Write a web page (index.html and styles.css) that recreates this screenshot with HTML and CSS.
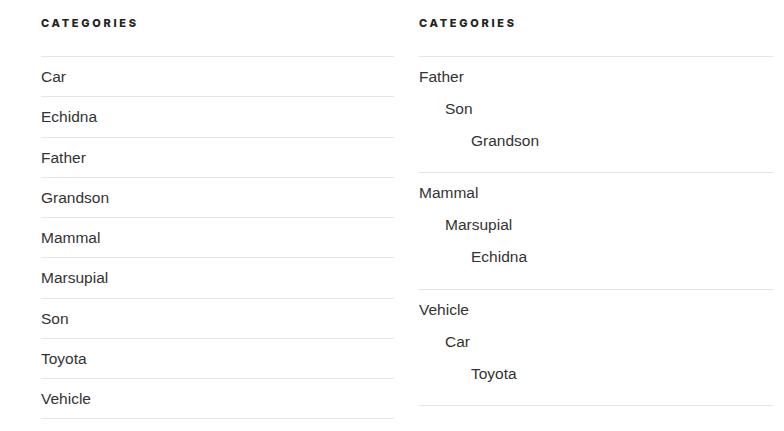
FILE: index.html
```html
<!DOCTYPE html>
<html>
<head>
<meta charset="utf-8">
<link rel="stylesheet" href="styles.css">
</head>
<body>
<div class="widgets">
  <section class="widget">
    <h2 class="widget-title">Categories</h2>
    <ul class="cats">
      <li><a href="#">Car</a></li>
      <li><a href="#">Echidna</a></li>
      <li><a href="#">Father</a></li>
      <li><a href="#">Grandson</a></li>
      <li><a href="#">Mammal</a></li>
      <li><a href="#">Marsupial</a></li>
      <li><a href="#">Son</a></li>
      <li><a href="#">Toyota</a></li>
      <li><a href="#">Vehicle</a></li>
    </ul>
  </section>
  <section class="widget">
    <h2 class="widget-title">Categories</h2>
    <ul class="cats tree">
      <li><a href="#">Father</a>
        <ul class="children">
          <li><a href="#">Son</a>
            <ul class="children">
              <li><a href="#">Grandson</a></li>
            </ul>
          </li>
        </ul>
      </li>
      <li><a href="#">Mammal</a>
        <ul class="children">
          <li><a href="#">Marsupial</a>
            <ul class="children">
              <li><a href="#">Echidna</a></li>
            </ul>
          </li>
        </ul>
      </li>
      <li><a href="#">Vehicle</a>
        <ul class="children">
          <li><a href="#">Car</a>
            <ul class="children">
              <li><a href="#">Toyota</a></li>
            </ul>
          </li>
        </ul>
      </li>
    </ul>
  </section>
</div>
</body>
</html>
```
FILE: styles.css
```css
html, body {
  margin: 0;
  padding: 0;
  background: #fff;
}
body {
  font-family: "Liberation Sans", Arial, sans-serif;
  color: #333;
}
.widgets {
  display: grid;
  grid-template-columns: 353px 354px;
  column-gap: 25px;
  padding: 0 0 0 41px;
}
.widget-title {
  margin: 0;
  padding: 17px 0 0;
  height: 56px;
  box-sizing: border-box;
  font-family: Inter, "Liberation Sans", sans-serif;
  font-size: 11px;
  font-weight: 800;
  letter-spacing: 2.7px;
  text-transform: uppercase;
  color: #222;
  line-height: 12px;
}
.cats {
  list-style: none;
  margin: 0;
  padding: 0;
  border-bottom: 1px solid #e6e6e6;
}
.cats > li {
  border-top: 1px solid #e6e6e6;
  padding: 8px 0;
  font-size: 15.5px;
  line-height: 23.25px;
}
.cats a {
  color: #333;
  text-decoration: none;
}
.tree > li {
  padding: 8px 0 20px;
}
.children {
  list-style: none;
  margin: 0;
  padding: 0 0 0 26px;
}
.children > li {
  padding-top: 8.75px;
}
```
